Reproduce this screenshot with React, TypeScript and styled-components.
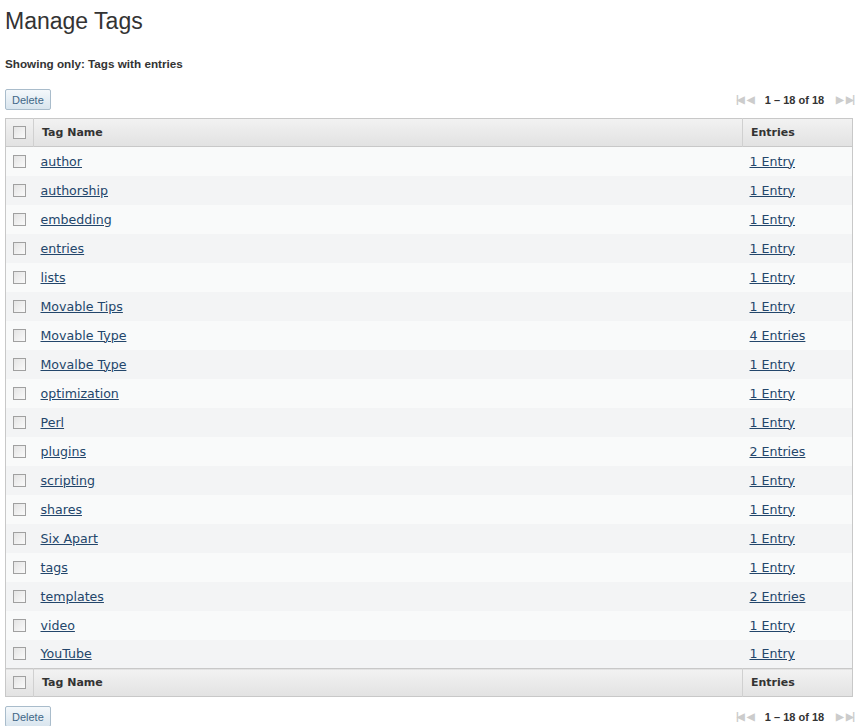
import { styled, createGlobalStyle } from 'styled-components';

const Global = createGlobalStyle`
  body { margin: 0; background: #fff; font-family: "Liberation Sans", Arial, sans-serif; }
`;

const tags: [string, string][] = [
  ['author', '1 Entry'], ['authorship', '1 Entry'], ['embedding', '1 Entry'], ['entries', '1 Entry'],
  ['lists', '1 Entry'], ['Movable Tips', '1 Entry'], ['Movable Type', '4 Entries'], ['Movalbe Type', '1 Entry'],
  ['optimization', '1 Entry'], ['Perl', '1 Entry'], ['plugins', '2 Entries'], ['scripting', '1 Entry'],
  ['shares', '1 Entry'], ['Six Apart', '1 Entry'], ['tags', '1 Entry'], ['templates', '2 Entries'],
  ['video', '1 Entry'], ['YouTube', '1 Entry'],
];

function Pager() {
  return (
    <PagerBox>
      <Arrow>|◀</Arrow><Arrow>◀</Arrow>
      <span>1 – 18 of 18</span>
      <Arrow>▶</Arrow><Arrow>▶|</Arrow>
    </PagerBox>
  );
}

function Actions({ top }: { top?: boolean }) {
  return (
    <ActionBar $top={top}>
      <Button>Delete</Button>
      <Pager />
    </ActionBar>
  );
}

function App() {
  return (
    <Page>
      <Global />
      <Title>Manage Tags</Title>
      <Filter>Showing only: Tags with entries</Filter>
      <Actions top />
      <Table>
        <thead>
          <HeadRow>
            <CheckCell><Box /></CheckCell>
            <HeadCell>Tag Name</HeadCell>
            <HeadCell $right>Entries</HeadCell>
          </HeadRow>
        </thead>
        <tbody>
          {tags.map(([name, count], i) => (
            <Row key={name} $odd={i % 2 === 1}>
              <CheckCell><Box /></CheckCell>
              <Cell><Link href="#">{name}</Link></Cell>
              <Cell><Link href="#">{count}</Link></Cell>
            </Row>
          ))}
        </tbody>
        <tfoot>
          <HeadRow $foot>
            <CheckCell><Box /></CheckCell>
            <HeadCell>Tag Name</HeadCell>
            <HeadCell $right>Entries</HeadCell>
          </HeadRow>
        </tfoot>
      </Table>
      <Actions />
    </Page>
  );
}
export default App;

const Page = styled.div`
  padding: 5px 12px 0 5px;
`;

const Title = styled.h1`
  margin: 0;
  font-size: 23px;
  font-weight: normal;
  color: #333;
  line-height: 32px;
`;

const Filter = styled.p`
  margin: 20px 0 0;
  font-size: 11.7px;
  font-weight: bold;
  color: #333;
`;

const ActionBar = styled.div<{ $top?: boolean }>`
  display: flex;
  justify-content: space-between;
  align-items: center;
  margin: ${p => (p.$top ? '19px 0 8px' : '9px 0 0')};
`;

const Button = styled.button`
  font-family: "Liberation Sans", Arial, sans-serif;
  font-size: 11px;
  color: #3f6787;
  height: 21px;
  padding: 0 6px;
  border: 1px solid #a9bccb;
  border-radius: 2px;
  background: linear-gradient(#f4f8fb, #d9e5ee);
`;

const PagerBox = styled.div`
  display: flex;
  align-items: center;
  gap: 4px;
  font-size: 11px;
  font-weight: bold;
  color: #333;
  span { margin: 0 8px; }
`;

const Arrow = styled.i`
  font-style: normal;
  font-size: 10px;
  color: #ccc;
  letter-spacing: -2px;
`;

const Table = styled.table`
  width: 100%;
  border-collapse: collapse;
  border: 1px solid #c8c8c8;
  font-family: "DejaVu Sans", Verdana, sans-serif;
  font-size: 12px;
`;

const HeadRow = styled.tr<{ $foot?: boolean }>`
  height: 28px;
  background: linear-gradient(#f2f2f2, #e2e2e2);
  border-${p => (p.$foot ? 'top' : 'bottom')}: 1px solid #c8c8c8;
`;

const HeadCell = styled.th<{ $right?: boolean }>`
  text-align: left;
  font-size: 11px;
  font-weight: bold;
  color: #333;
  padding: 0 8px;
  border-left: 1px solid #d0d0d0;
  width: ${p => (p.$right ? '93px' : 'auto')};
`;

const Row = styled.tr<{ $odd: boolean }>`
  height: 29px;
  background: ${p => (p.$odd ? '#f3f4f5' : '#f9fafa')};
`;

const CheckCell = styled.td`
  width: 12px;
  padding: 0 7px;
  vertical-align: middle;
`;

const Box = styled.div`
  width: 11px;
  height: 11px;
  border: 1px solid #a0a0a0;
  background: linear-gradient(135deg, #e4e4e4, #fafafa);
`;

const Cell = styled.td`
  padding: 0 7px;
`;

const Link = styled.a`
  color: #23466b;
  font-size: 12.6px;
  text-decoration: underline;
`;
